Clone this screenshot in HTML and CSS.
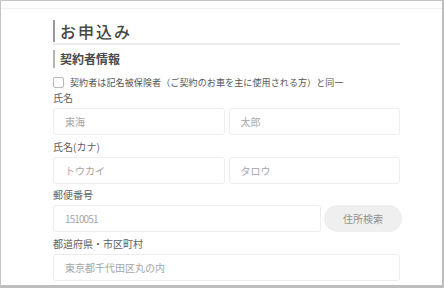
FILE: index.html
```html
<!DOCTYPE html>
<html lang="ja">
<head>
<meta charset="utf-8">
<link rel="stylesheet" href="styles.css">
</head>
<body>
<div class="frame">
  <div class="card">
    <div class="form">
      <div class="title-wrap">
        <h1 class="title">お申込み</h1>
      </div>
      <h2 class="subtitle">契約者情報</h2>
      <label class="check-row">
        <span class="checkbox"></span>
        <span class="check-text">契約者は記名被保険者（ご契約のお車を主に使用される方）と同一</span>
      </label>
      <div class="field field-first">
        <div class="field-label">氏名</div>
        <div class="row">
          <input class="input" type="text" placeholder="東海">
          <input class="input" type="text" placeholder="太郎">
        </div>
      </div>
      <div class="field">
        <div class="field-label">氏名(カナ)</div>
        <div class="row">
          <input class="input" type="text" placeholder="トウカイ">
          <input class="input" type="text" placeholder="タロウ">
        </div>
      </div>
      <div class="field">
        <div class="field-label">郵便番号</div>
        <div class="row row-postal">
          <input class="input input-postal" type="text" placeholder="1510051">
          <button class="search-btn" type="button">住所検索</button>
        </div>
      </div>
      <div class="field">
        <div class="field-label">都道府県・市区町村</div>
        <div class="row">
          <input class="input" type="text" placeholder="東京都千代田区丸の内">
        </div>
      </div>
    </div>
  </div>
</div>
</body>
</html>
```
FILE: styles.css
```css
* { box-sizing: border-box; }
html, body {
  margin: 0;
  padding: 0;
  background: #ffffff;
}
body {
  font-family: "Noto Sans CJK JP", "Noto Sans", sans-serif;
  color: #555;
}
.frame {
  width: 444px;
  height: 288px;
  border-top: 1px solid #c4c4c4;
  border-left: 1px solid #c4c4c4;
  border-right: 2px solid #bdbdbd;
  border-bottom: 3px solid #bdbdbd;
  overflow: hidden;
  padding-top: 7px;
}
.card {
  border-top: 1px solid #f1f1f1;
  height: 100%;
  padding: 11px 0 0 52px;
}
.form {
  width: 347px;
}
.title-wrap {
  border-bottom: 2px solid #ececec;
  padding-bottom: 1px;
}
.title {
  margin: 0;
  border-left: 2px solid #9a9a9a;
  padding-left: 5px;
  font-size: 16px;
  line-height: 22px;
  letter-spacing: 2px;
  font-weight: 500;
  color: #474747;
}
.subtitle {
  margin: 5px 0 0;
  border-left: 2px solid #b5b5b5;
  padding-left: 5px;
  font-size: 12px;
  line-height: 18px;
  font-weight: 700;
  color: #4a4a4a;
}
.check-row {
  display: flex;
  align-items: center;
  gap: 6px;
  margin-top: 8px;
  height: 13px;
}
.checkbox {
  width: 11px;
  height: 11px;
  border: 1px solid #b8b8b8;
  border-radius: 2px;
  background: #fff;
  flex: none;
}
.check-text {
  font-size: 9px;
  line-height: 13px;
  letter-spacing: 0.12px;
  color: #555;
  white-space: nowrap;
}
.field {
  margin-top: 4.67px;
}
.field-first {
  margin-top: 2px;
}
.field-label {
  font-size: 10px;
  line-height: 14px;
  color: #5e5e5e;
  margin-bottom: 3px;
}
.row {
  display: flex;
  gap: 4px;
}
.row-postal {
  width: 349px;
  gap: 3px;
}
.input {
  flex: 1;
  min-width: 0;
  height: 27px;
  border: 1px solid #ededed;
  border-radius: 3px;
  padding: 0 0 0 11px;
  font-family: "Noto Sans CJK JP", "Noto Sans", sans-serif;
  font-size: 10px;
  color: #555;
  background: #fff;
  outline: none;
}
.input::placeholder {
  color: #a6a6a6;
}
.input-postal::placeholder {
  letter-spacing: -0.9px;
}
.search-btn {
  width: 78px;
  height: 27px;
  flex: none;
  border: none;
  border-radius: 14px;
  background: #efefef;
  color: #8f8f8f;
  font-family: "Noto Sans CJK JP", "Noto Sans", sans-serif;
  font-size: 10px;
  padding: 0;
}
```
